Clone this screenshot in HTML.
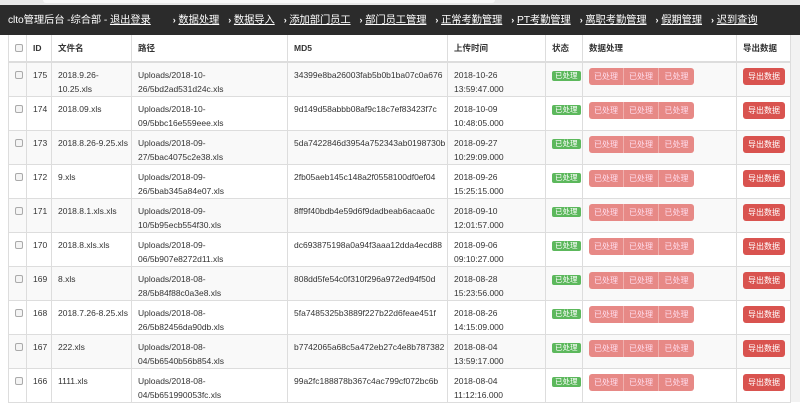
<!DOCTYPE html>
<html><head><meta charset="utf-8"><style>
*{box-sizing:border-box;margin:0;padding:0}
body{width:800px;height:402px;overflow:hidden;background:#fff;font-family:"Liberation Sans","Noto Sans CJK SC",sans-serif;font-size:8.5px;color:#333;position:relative}
.top{position:absolute;left:0;top:0;width:800px;height:5px;background:#e8e8e8}
.top i{position:absolute;left:43px;top:0;width:452px;height:3px;background:#f8f8f8;border-radius:0 0 3px 3px}
.nav{position:absolute;left:0;top:5px;width:800px;height:30px;background:#2b2b2b;color:#fff;font-size:10.3px;line-height:30px;padding-left:8px;white-space:nowrap;letter-spacing:-0.1px}
.nav u{color:#fff}
.nav b{font-weight:bold;margin-left:9px;font-size:9px}
table{position:absolute;left:8px;top:35px;width:782px;border-collapse:collapse;table-layout:fixed}
td,th{border:1px solid #ddd;vertical-align:top;padding:5px 6px 0;line-height:14px;text-align:left;overflow:hidden;white-space:nowrap}
th{height:27px;padding-top:6px;font-weight:bold;border-top:none;border-bottom:2px solid #ddd}
tr.r td{height:34px}
tr.r:nth-child(even) td{background:#f9f9f9}
.cb{display:inline-block;width:8px;height:8px;border:1px solid #aaa;border-radius:2px;background:#f4f4f4;margin-top:3px}
.st{display:inline-block;background:#5cb85c;color:#fff;font-size:7.5px;line-height:10px;padding:0 3px;border-radius:2px;margin-top:1px}
.g{display:inline-flex;margin-top:0}
.g span{background:#e78986;font-size:8px;line-height:17px;width:35px;text-align:center;border-right:1px solid #f0b0ae;color:#fde}
.g span:first-child{border-radius:3px 0 0 3px}.g span:last-child{border-radius:0 3px 3px 0;border:none}
.ex{display:inline-block;background:#d9534f;color:#fff;font-size:8px;line-height:17px;width:42px;text-align:center;border-radius:3px}
.side{position:absolute;left:790px;top:35px;width:10px;height:367px;background:#f2f2f2;border-left:1px solid #ddd}
</style></head><body>
<div class="top"><i></i></div>
<div class="nav">clto管理后台 -综合部 - <u>退出登录</u><b style="margin-left:22px">›</b> <u>数据处理</u><b>›</b> <u>数据导入</u><b>›</b> <u>添加部门员工</u><b>›</b> <u>部门员工管理</u><b>›</b> <u>正常考勤管理</u><b>›</b> <u>PT考勤管理</u><b>›</b> <u>离职考勤管理</u><b>›</b> <u>假期管理</u><b>›</b> <u>迟到查询</u></div>
<div class="side"></div>
<table>
<colgroup><col style="width:18px"><col style="width:25px"><col style="width:80px"><col style="width:156px"><col style="width:160px"><col style="width:98px"><col style="width:37px"><col style="width:154px"><col style="width:54px"></colgroup>
<tr><th><span class="cb"></span></th><th>ID</th><th>文件名</th><th>路径</th><th>MD5</th><th>上传时间</th><th>状态</th><th>数据处理</th><th>导出数据</th></tr>
<tr class="r"><td><span class="cb"></span></td><td>175</td><td>2018.9.26-<br>10.25.xls</td><td>Uploads/2018-10-<br>26/5bd2ad531d24c.xls</td><td>34399e8ba26003fab5b0b1ba07c0a676</td><td>2018-10-26<br>13:59:47.000</td><td><span class="st">已处理</span></td><td><span class="g"><span>已处理</span><span>已处理</span><span>已处理</span></span></td><td><span class="ex">导出数据</span></td></tr>
<tr class="r"><td><span class="cb"></span></td><td>174</td><td>2018.09.xls</td><td>Uploads/2018-10-<br>09/5bbc16e559eee.xls</td><td>9d149d58abbb08af9c18c7ef83423f7c</td><td>2018-10-09<br>10:48:05.000</td><td><span class="st">已处理</span></td><td><span class="g"><span>已处理</span><span>已处理</span><span>已处理</span></span></td><td><span class="ex">导出数据</span></td></tr>
<tr class="r"><td><span class="cb"></span></td><td>173</td><td>2018.8.26-9.25.xls</td><td>Uploads/2018-09-<br>27/5bac4075c2e38.xls</td><td>5da7422846d3954a752343ab0198730b</td><td>2018-09-27<br>10:29:09.000</td><td><span class="st">已处理</span></td><td><span class="g"><span>已处理</span><span>已处理</span><span>已处理</span></span></td><td><span class="ex">导出数据</span></td></tr>
<tr class="r"><td><span class="cb"></span></td><td>172</td><td>9.xls</td><td>Uploads/2018-09-<br>26/5bab345a84e07.xls</td><td>2fb05aeb145c148a2f0558100df0ef04</td><td>2018-09-26<br>15:25:15.000</td><td><span class="st">已处理</span></td><td><span class="g"><span>已处理</span><span>已处理</span><span>已处理</span></span></td><td><span class="ex">导出数据</span></td></tr>
<tr class="r"><td><span class="cb"></span></td><td>171</td><td>2018.8.1.xls.xls</td><td>Uploads/2018-09-<br>10/5b95ecb554f30.xls</td><td>8ff9f40bdb4e59d6f9dadbeab6acaa0c</td><td>2018-09-10<br>12:01:57.000</td><td><span class="st">已处理</span></td><td><span class="g"><span>已处理</span><span>已处理</span><span>已处理</span></span></td><td><span class="ex">导出数据</span></td></tr>
<tr class="r"><td><span class="cb"></span></td><td>170</td><td>2018.8.xls.xls</td><td>Uploads/2018-09-<br>06/5b907e8272d11.xls</td><td>dc693875198a0a94f3aaa12dda4ecd88</td><td>2018-09-06<br>09:10:27.000</td><td><span class="st">已处理</span></td><td><span class="g"><span>已处理</span><span>已处理</span><span>已处理</span></span></td><td><span class="ex">导出数据</span></td></tr>
<tr class="r"><td><span class="cb"></span></td><td>169</td><td>8.xls</td><td>Uploads/2018-08-<br>28/5b84f88c0a3e8.xls</td><td>808dd5fe54c0f310f296a972ed94f50d</td><td>2018-08-28<br>15:23:56.000</td><td><span class="st">已处理</span></td><td><span class="g"><span>已处理</span><span>已处理</span><span>已处理</span></span></td><td><span class="ex">导出数据</span></td></tr>
<tr class="r"><td><span class="cb"></span></td><td>168</td><td>2018.7.26-8.25.xls</td><td>Uploads/2018-08-<br>26/5b82456da90db.xls</td><td>5fa7485325b3889f227b22d6feae451f</td><td>2018-08-26<br>14:15:09.000</td><td><span class="st">已处理</span></td><td><span class="g"><span>已处理</span><span>已处理</span><span>已处理</span></span></td><td><span class="ex">导出数据</span></td></tr>
<tr class="r"><td><span class="cb"></span></td><td>167</td><td>222.xls</td><td>Uploads/2018-08-<br>04/5b6540b56b854.xls</td><td>b7742065a68c5a472eb27c4e8b787382</td><td>2018-08-04<br>13:59:17.000</td><td><span class="st">已处理</span></td><td><span class="g"><span>已处理</span><span>已处理</span><span>已处理</span></span></td><td><span class="ex">导出数据</span></td></tr>
<tr class="r"><td><span class="cb"></span></td><td>166</td><td>1111.xls</td><td>Uploads/2018-08-<br>04/5b651990053fc.xls</td><td>99a2fc188878b367c4ac799cf072bc6b</td><td>2018-08-04<br>11:12:16.000</td><td><span class="st">已处理</span></td><td><span class="g"><span>已处理</span><span>已处理</span><span>已处理</span></span></td><td><span class="ex">导出数据</span></td></tr>
</table>
</body></html>
